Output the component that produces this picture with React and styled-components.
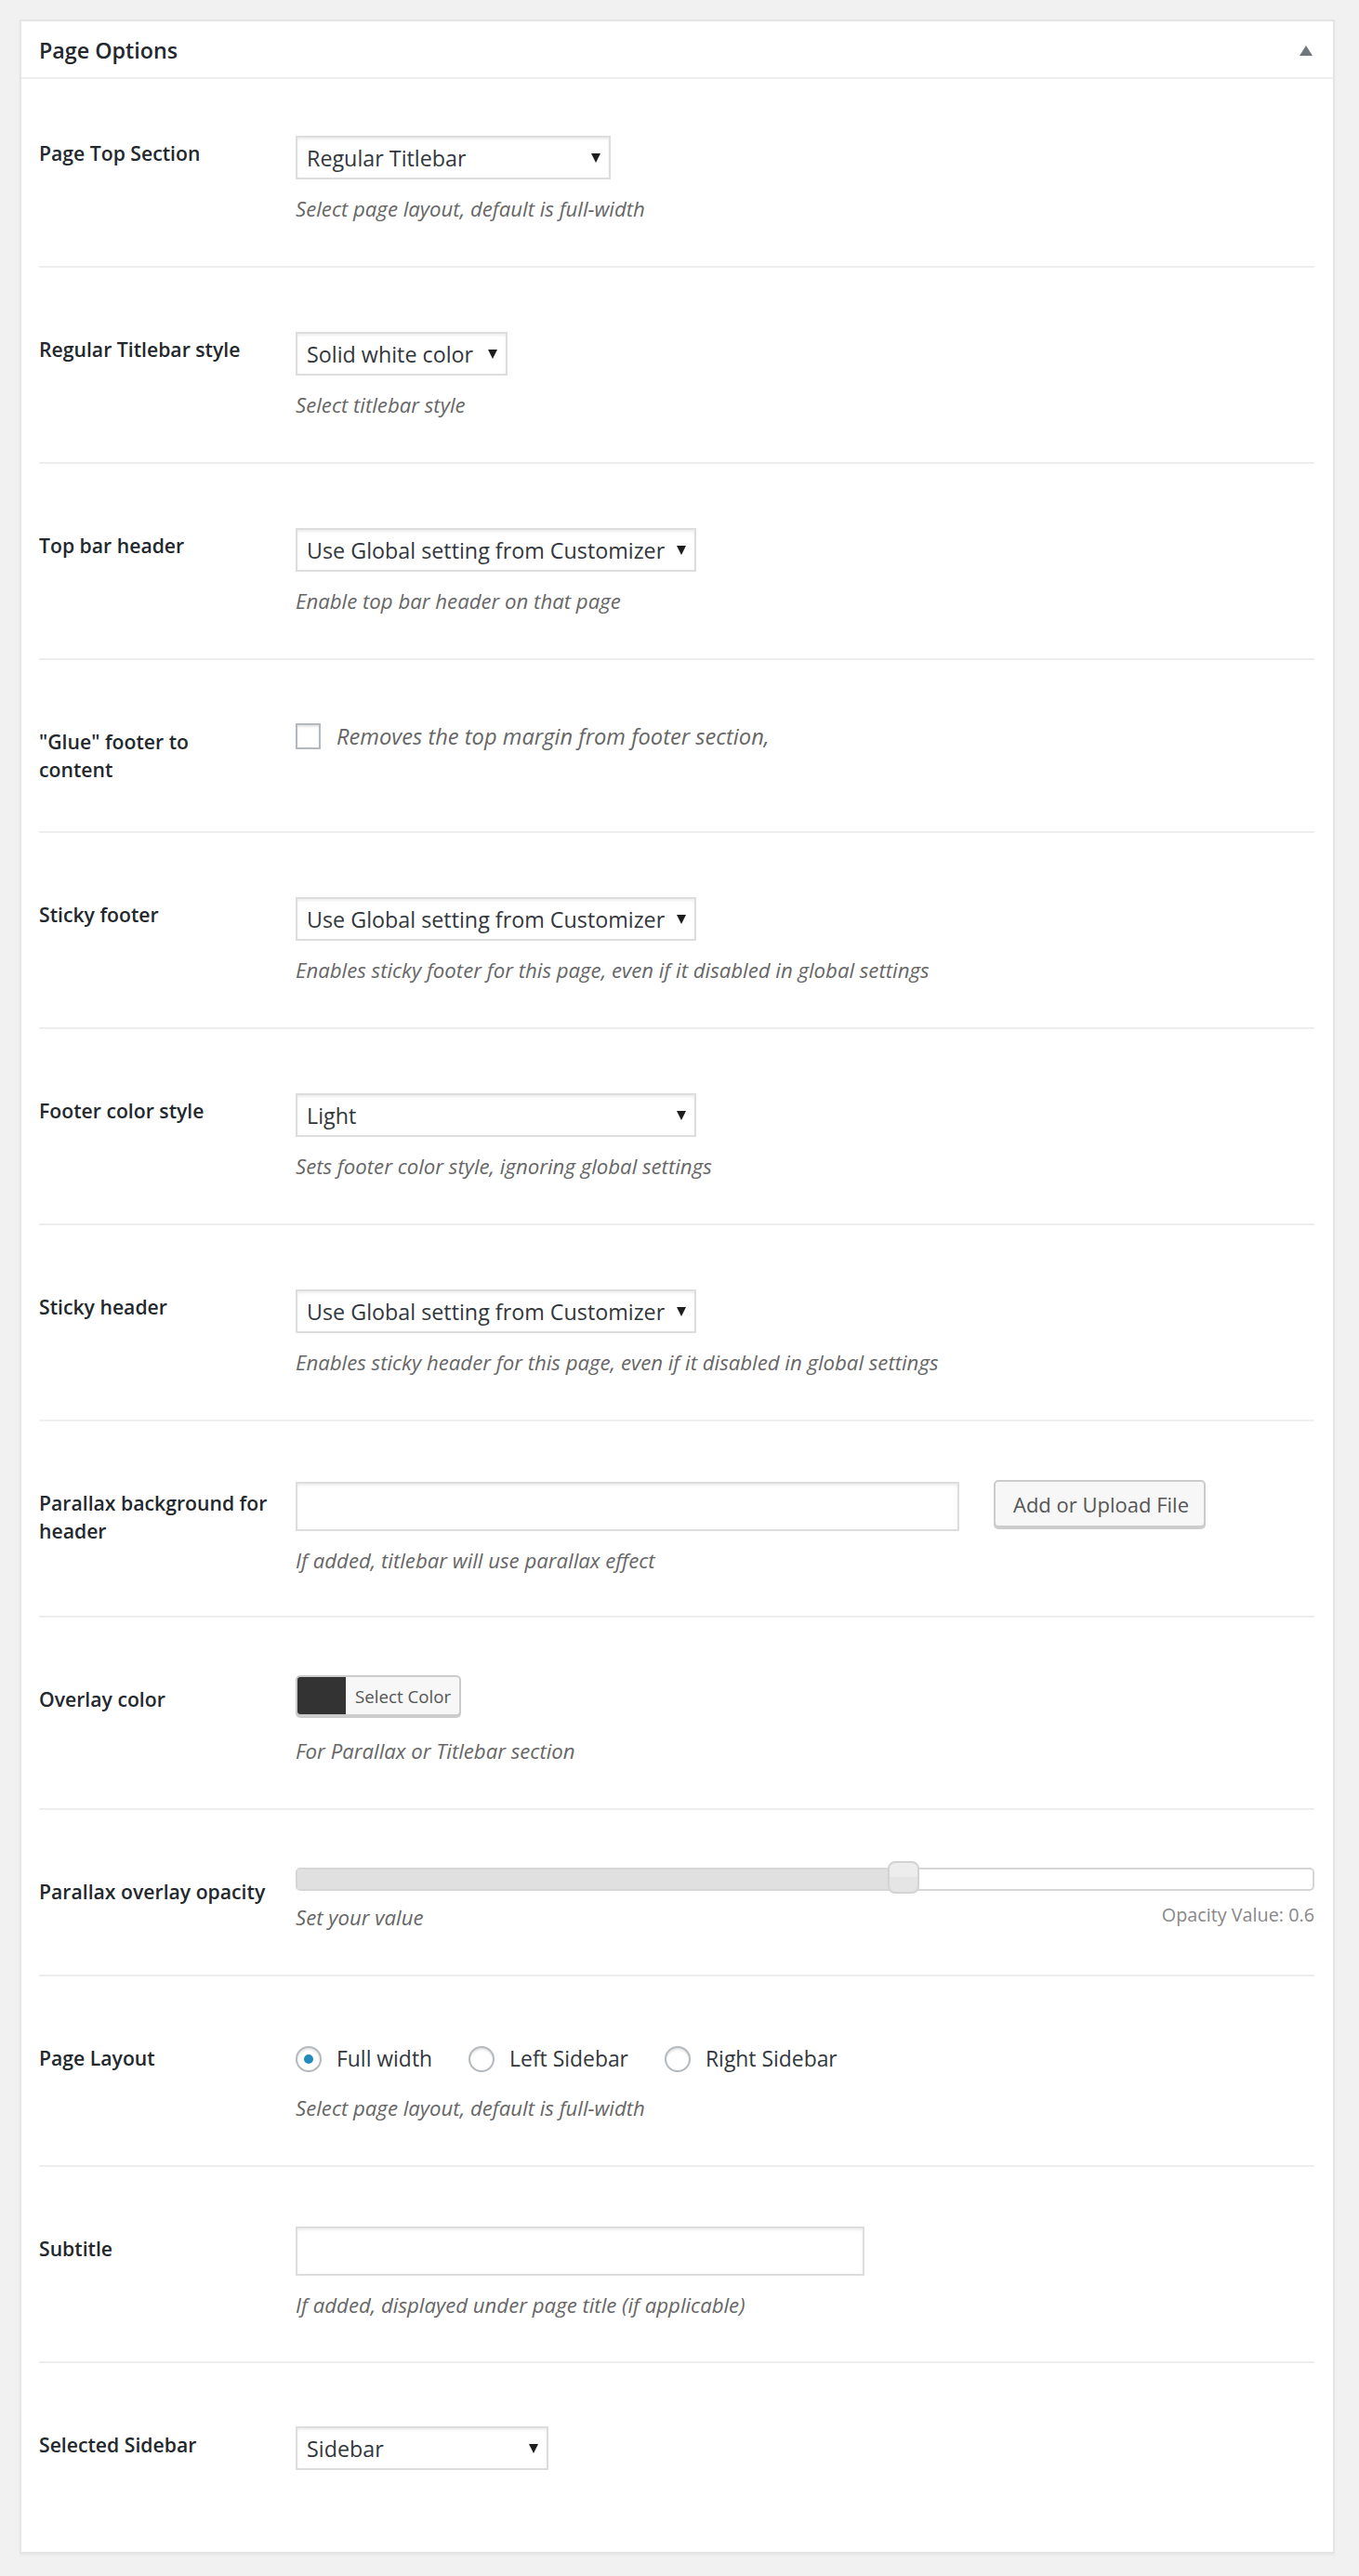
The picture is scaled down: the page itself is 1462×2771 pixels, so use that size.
import React from "react";
import styled, { createGlobalStyle } from "styled-components";

const GlobalStyle = createGlobalStyle`
  html, body { margin: 0; padding: 0; background: #f1f1f1; }
  body { font-family: "Open Sans", "Noto Sans", sans-serif; color: #444; }
  *, *::before, *::after { box-sizing: border-box; }
`;

const Page = styled.div`
  padding: 21px 26px 24px 21px;
`;

const Panel = styled.section`
  background: #fff;
  border: 2px solid #e5e5e5;
  box-shadow: 0 2px 2px rgba(0, 0, 0, 0.04);
`;

const PanelHeader = styled.header`
  height: 62px;
  display: flex;
  align-items: center;
  justify-content: space-between;
  padding: 2px 22px 0 19px;
  border-bottom: 2px solid #eee;
`;

const Title = styled.h2`
  margin: 0;
  font-size: 23.3px;
  font-weight: 600;
  color: #23282d;
  line-height: 30px;
`;

const PanelBody = styled.div`
  padding: 0 20px 0 19px;
`;

const Row = styled.div`
  display: grid;
  grid-template-columns: 276px 1fr;
  align-items: start;
  padding: ${(p) => p.$top ?? 62}px 0 ${(p) => p.$bottom ?? 46}px;
  border-bottom: 2px solid #eee;
  &:last-child { border-bottom: none; }
`;

const Label = styled.div`
  padding-top: 11px;
  font-size: 21.2px;
  font-weight: 600;
  line-height: 30px;
  color: #23282d;
  white-space: pre-line;
`;

const Content = styled.div`
  display: flex;
  flex-direction: column;
  align-items: ${(p) => (p.$stretch ? "stretch" : "flex-start")};
  padding-top: ${(p) => p.$offset ?? 0}px;
`;

const Description = styled.p`
  margin: ${(p) => p.$gap ?? 17}px 0 0;
  font-size: 22.2px;
  line-height: 30px;
  font-style: italic;
  color: #666;
`;

const SelectBox = styled.div`
  width: ${(p) => p.$width}px;
  height: 47px;
  display: flex;
  align-items: center;
  justify-content: space-between;
  padding: 0 9px 0 10px;
  border: 2px solid #ddd;
  box-shadow: inset 0 2px 3px rgba(0, 0, 0, 0.07);
  background: #fff;
  font-size: 23.3px;
  color: #32373c;
  white-space: nowrap;
`;

const SelectValue = styled.span`
  line-height: 30px;
`;

const Arrow = () => (
  <svg width="10" height="10" viewBox="0 0 10 10" aria-hidden="true">
    <polygon points="0,0 10,0 5,10" fill="#1d1d1d" />
  </svg>
);

const Select = ({ width, value }) => (
  <SelectBox $width={width}>
    <SelectValue>{value}</SelectValue>
    <Arrow />
  </SelectBox>
);

const TextInput = styled.div`
  width: ${(p) => p.$width}px;
  height: 53px;
  margin-top: ${(p) => p.$shift ?? 0}px;
  border: 2px solid #ddd;
  box-shadow: inset 0 2px 3px rgba(0, 0, 0, 0.07);
  background: #fff;
`;

const InlineRow = styled.div`
  display: flex;
  align-items: ${(p) => p.$align ?? "flex-start"};
  gap: ${(p) => p.$gap ?? 0}px;
`;

const Button = styled.div`
  height: 51px;
  padding: 0 16px 0 19px;
  display: flex;
  align-items: center;
  background: #f7f7f7;
  border: 2px solid #ccc;
  border-radius: 5px;
  box-shadow: 0 2px 0 #ccc;
  font-size: 22px;
  color: #555;
  white-space: nowrap;
`;

const CheckBox = styled.span`
  width: 27px;
  height: 28px;
  flex: none;
  border: 2px solid #b4b9be;
  background: #fff;
  box-shadow: inset 0 2px 2px rgba(0, 0, 0, 0.1);
`;

const CheckText = styled.span`
  font-size: 23.7px;
  line-height: 30px;
  font-style: italic;
  color: #666;
`;

const ColorButton = styled.div`
  display: flex;
  height: 44px;
  width: 178px;
  border: 2px solid #ccc;
  border-radius: 5px;
  box-shadow: 0 2px 0 #ccc;
  overflow: hidden;
  background: #f7f7f7;
`;

const Swatch = styled.span`
  width: 52px;
  background: ${(p) => p.$color};
`;

const ColorLabel = styled.span`
  display: flex;
  align-items: center;
  padding-left: 10px;
  font-size: 18.7px;
  color: #555;
  white-space: nowrap;
`;

const SliderWrap = styled.div`
  display: flex;
  flex-direction: column;
`;

const Track = styled.div`
  position: relative;
  height: 25px;
  border: 2px solid #d6d6d6;
  border-radius: 5px;
  background: #fff;
`;

const Fill = styled.div`
  height: 100%;
  background: #e0e0e0;
  border-radius: 3px 0 0 3px;
`;

const Handle = styled.div`
  position: absolute;
  top: -9px;
  width: 34px;
  height: 35px;
  border: 2px solid #d3d3d3;
  border-radius: 8px;
  background: linear-gradient(#ededed 0%, #ededed 50%, #e5e5e5 50%, #e5e5e5 100%);
`;

const SliderFoot = styled.div`
  display: flex;
  justify-content: space-between;
  align-items: center;
  margin-top: 14px;
`;

const ValueNote = styled.span`
  font-size: 19.8px;
  line-height: 26px;
  color: #888;
  margin-top: -6px;
`;

const RadioGroup = styled.div`
  height: 44px;
  display: flex;
  align-items: center;
  gap: 39px;
`;

const RadioItem = styled.label`
  display: flex;
  align-items: center;
  gap: 16px;
  font-size: 22.9px;
  line-height: 30px;
  color: #32373c;
`;

const RadioCircle = styled.span`
  position: relative;
  width: 28px;
  height: 28px;
  flex: none;
  border: 2px solid #b4b9be;
  border-radius: 50%;
  background: #fff;
  box-shadow: inset 0 2px 2px rgba(0, 0, 0, 0.1);
  &::before {
    content: "";
    display: ${(p) => (p.$checked ? "block" : "none")};
    position: absolute;
    left: 50%;
    top: 50%;
    width: 10px;
    height: 10px;
    margin: -5px 0 0 -5px;
    border-radius: 50%;
    background: #1e8cbe;
  }
`;

const Toggle = () => (
  <svg width="14" height="11" viewBox="0 0 14 11" aria-hidden="true">
    <polygon points="7,0 14,11 0,11" fill="#72777c" />
  </svg>
);

const opacity = 0.6;

export default function App() {
  const trackWidth = 1097;
  const handleLeft = Math.round(opacity * (trackWidth - 4 - 34));
  return (
    <>
      <GlobalStyle />
      <Page>
        <Panel>
          <PanelHeader>
            <Title>Page Options</Title>
            <Toggle />
          </PanelHeader>
          <PanelBody>
            <Row $top={54}>
              <Label>Page Top Section</Label>
              <Content $offset={7}>
                <Select width={339} value="Regular Titlebar" />
                <Description>Select page layout, default is full-width</Description>
              </Content>
            </Row>

            <Row>
              <Label>Regular Titlebar style</Label>
              <Content $offset={7}>
                <Select width={228} value="Solid white color" />
                <Description>Select titlebar style</Description>
              </Content>
            </Row>

            <Row>
              <Label>Top bar header</Label>
              <Content $offset={7}>
                <Select width={431} value="Use Global setting from Customizer" />
                <Description>Enable top bar header on that page</Description>
              </Content>
            </Row>

            <Row $bottom={51}>
              <Label>{'"Glue" footer to\ncontent'}</Label>
              <Content $offset={5}>
                <InlineRow $align="center" $gap={17}>
                  <CheckBox />
                  <CheckText>Removes the top margin from footer section,</CheckText>
                </InlineRow>
              </Content>
            </Row>

            <Row>
              <Label>Sticky footer</Label>
              <Content $offset={7}>
                <Select width={431} value="Use Global setting from Customizer" />
                <Description>Enables sticky footer for this page, even if it disabled in global settings</Description>
              </Content>
            </Row>

            <Row>
              <Label>Footer color style</Label>
              <Content $offset={7}>
                <Select width={431} value="Light" />
                <Description>Sets footer color style, ignoring global settings</Description>
              </Content>
            </Row>

            <Row>
              <Label>Sticky header</Label>
              <Content $offset={7}>
                <Select width={431} value="Use Global setting from Customizer" />
                <Description>Enables sticky header for this page, even if it disabled in global settings</Description>
              </Content>
            </Row>

            <Row $bottom={44}>
              <Label>{"Parallax background for\nheader"}</Label>
              <Content $offset={1}>
                <InlineRow $gap={37}>
                  <TextInput $width={714} $shift={2} />
                  <Button>Add or Upload File</Button>
                </InlineRow>
                <Description>If added, titlebar will use parallax effect</Description>
              </Content>
            </Row>

            <Row $bottom={46}>
              <Label>Overlay color</Label>
              <Content>
                <ColorButton>
                  <Swatch $color="#333333" />
                  <ColorLabel>Select Color</ColorLabel>
                </ColorButton>
                <Description $gap={23}>For Parallax or Titlebar section</Description>
              </Content>
            </Row>

            <Row>
              <Label>Parallax overlay opacity</Label>
              <Content $stretch>
                <SliderWrap>
                  <Track>
                    <Fill style={{ width: handleLeft + 17 }} />
                    <Handle style={{ left: handleLeft }} />
                  </Track>
                  <SliderFoot>
                    <Description $gap={0}>Set your value</Description>
                    <ValueNote>Opacity Value: {opacity}</ValueNote>
                  </SliderFoot>
                </SliderWrap>
              </Content>
            </Row>

            <Row>
              <Label>Page Layout</Label>
              <Content $offset={5}>
                <RadioGroup>
                  <RadioItem>
                    <RadioCircle $checked />
                    Full width
                  </RadioItem>
                  <RadioItem>
                    <RadioCircle />
                    Left Sidebar
                  </RadioItem>
                  <RadioItem>
                    <RadioCircle />
                    Right Sidebar
                  </RadioItem>
                </RadioGroup>
                <Description $gap={16}>Select page layout, default is full-width</Description>
              </Content>
            </Row>

            <Row $bottom={45}>
              <Label>Subtitle</Label>
              <Content $offset={2}>
                <TextInput $width={612} />
                <Description>If added, displayed under page title (if applicable)</Description>
              </Content>
            </Row>

            <Row $bottom={88}>
              <Label>Selected Sidebar</Label>
              <Content $offset={6}>
                <Select width={272} value="Sidebar" />
              </Content>
            </Row>
          </PanelBody>
        </Panel>
      </Page>
    </>
  );
}
